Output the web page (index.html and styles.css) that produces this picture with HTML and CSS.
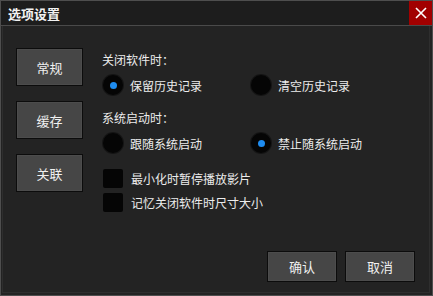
FILE: index.html
```html
<!DOCTYPE html>
<html lang="zh">
<head>
<meta charset="utf-8">
<title>选项设置</title>
<link rel="stylesheet" href="styles.css">
</head>
<body>
<div class="window">
  <div class="titlebar">
    <span class="title">选项设置</span>
    <button class="close" aria-label="关闭">
      <svg width="12" height="12" viewBox="0 0 12 12"><path d="M1 1L11 11M11 1L1 11" stroke="#fff" stroke-width="1.6" fill="none"/></svg>
    </button>
  </div>
  <div class="body">
    <div class="main">
      <div class="tabs">
        <button class="btn tab">常规</button>
        <button class="btn tab">缓存</button>
        <button class="btn tab">关联</button>
      </div>
      <div class="options">
        <div class="label">关闭软件时：</div>
        <div class="radio-row first">
          <label class="radio"><span class="dot checked"></span>保留历史记录</label>
          <label class="radio"><span class="dot"></span>清空历史记录</label>
        </div>
        <div class="label second">系统启动时：</div>
        <div class="radio-row first">
          <label class="radio"><span class="dot"></span>跟随系统启动</label>
          <label class="radio"><span class="dot checked"></span>禁止随系统启动</label>
        </div>
        <label class="check first-check"><span class="box"></span>最小化时暂停播放影片</label>
        <label class="check"><span class="box"></span>记忆关闭软件时尺寸大小</label>
      </div>
    </div>
    <div class="footer">
      <button class="btn action">确认</button>
      <button class="btn action">取消</button>
    </div>
  </div>
</div>
</body>
</html>
```
FILE: styles.css
```css
html, body {
  margin: 0;
  padding: 0;
  background: #232323;
}
body {
  font-family: "Noto Sans CJK SC", "Noto Sans", sans-serif;
  color: #ececec;
  font-size: 12px;
}
.window {
  width: 433px;
  height: 296px;
  box-sizing: border-box;
  border: 1px solid #4e4e4e;
  background: #232323;
  display: flex;
  flex-direction: column;
}
.titlebar {
  height: 24px;
  flex: none;
  background: #1d1d1d;
  border-bottom: 1px solid #4a4a4a;
  display: flex;
  align-items: center;
  justify-content: space-between;
}
.title {
  padding-left: 7px;
  font-size: 13px;
  font-weight: bold;
  color: #f2f2f2;
}
.close {
  width: 23px;
  height: 24px;
  border: none;
  padding: 0;
  margin: 0;
  background: #a20000;
  display: flex;
  align-items: center;
  justify-content: center;
}
.body {
  flex: 1;
  display: flex;
  flex-direction: column;
  justify-content: space-between;
  padding: 22px 17px 13px 14px;
  border-left: 1px solid #2e2e2e;
  border-right: 1px solid #2e2e2e;
  border-bottom: 1px solid #2e2e2e;
  margin: 0 2px 2px 1px;
  padding-left: 13px;
  padding-right: 14px;
  padding-bottom: 10px;
}
.main {
  display: flex;
}
.btn {
  font-family: "Noto Sans CJK SC", sans-serif;
  background: #464646;
  color: #f0f0f0;
  border: 1px solid #0c0c0c;
  box-shadow: inset 0 0 0 1px #4c4c4c;
  padding: 0;
  margin: 0;
}
.tabs {
  display: flex;
  flex-direction: column;
  gap: 15px;
}
.tab {
  width: 67px;
  height: 38px;
  font-size: 13px;
}
.options {
  margin-left: 19px;
  margin-top: 2px;
  display: flex;
  flex-direction: column;
}
.label {
  height: 20px;
  line-height: 20px;
}
.label.second {
  margin-top: 13px;
}
.radio-row {
  display: grid;
  grid-template-columns: 148px auto;
  margin-top: 5px;
  height: 20px;
}
.radio {
  display: flex;
  align-items: center;
  gap: 7px;
  padding-left: 1px;
}
.dot {
  width: 20px;
  height: 20px;
  border-radius: 50%;
  background: #050505;
  box-shadow: 0 0 0 1px #151515;
  display: flex;
  align-items: center;
  justify-content: center;
  flex: none;
}
.dot.checked::after {
  content: "";
  width: 7px;
  height: 7px;
  border-radius: 50%;
  background: #1e8cf0;
}
.check {
  display: flex;
  align-items: center;
  gap: 8px;
  height: 19px;
  padding-left: 1px;
  margin-top: 5px;
}
.check.first-check {
  margin-top: 16px;
}
.box {
  width: 20px;
  height: 19px;
  background: #050505;
  border-radius: 2px;
  flex: none;
}
.footer {
  display: flex;
  justify-content: flex-end;
  gap: 8px;
}
.action {
  width: 70px;
  height: 31px;
  font-size: 13px;
}
```
